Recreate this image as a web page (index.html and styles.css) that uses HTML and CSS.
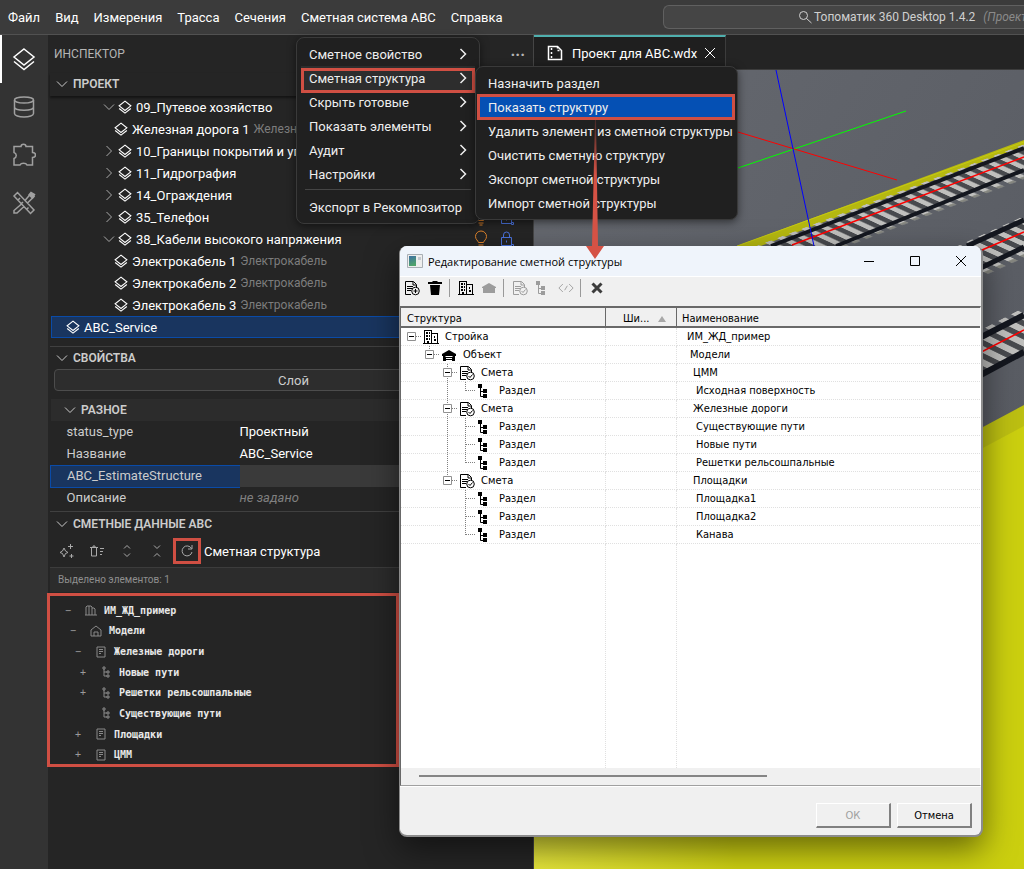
FILE: index.html
```html
<!DOCTYPE html>
<html lang="ru">
<head>
    <meta charset="UTF-8">
    <meta name="viewport" content="width=device-width, initial-scale=1.0">
    <title>Топоматик 360 Desktop</title>
    <link rel="stylesheet" href="styles.css">
</head>
<body>

    <!-- Icon sprite -->
    <svg class="sprite" aria-hidden="true">
        <symbol id="layers" viewBox="0 0 24 24"><path d="M12 2 22 10 12 18 2 10zM2 14.5 12 22.5 22 14.5"/></symbol>
        <symbol id="down" viewBox="0 0 12 12"><path d="M1 3.5 6 8.5 11 3.5"/></symbol>
        <symbol id="right" viewBox="0 0 12 12"><path d="M3.5 1 8.500 6 3.5 11"/></symbol>
        <symbol id="bulb" viewBox="0 0 16 18"><path d="M5.500 12.500C5 10.500 2.500 9.500 2.500 6.500a5.500 5.500 0 0 1 11 0c0 3-2.500 4-3 6zM5.500 15h5M6.500 17h3"/></symbol>
        <symbol id="lock" viewBox="0 0 16 18"><path d="M2.500 7.500h10v8h-10zM4.500 7.500V5a3 3 0 0 1 6 0v2.500M7.500 10.500v2M12.500 14.500h2v2h-2z"/></symbol>
        <symbol id="house" viewBox="0 0 12 12"><path d="M1 5 6 1l5 4v6H1zM4 11V7h4v4"/></symbol>
        <symbol id="sheet" viewBox="0 0 12 12"><path d="M2 1h8v10H2zM4 3.500h4M4 5.500h4M4 7.500h2"/></symbol>
        <symbol id="towers" viewBox="0 0 12 12"><path d="M1 11V3l1-1h4l1 1v8M7 4h2l1 1v6M4 2v9M0 11h12"/></symbol>
        <symbol id="branch" viewBox="0 0 12 12"><path d="M3 1h2v2H3zM4 3v7h3M4 6h3M7 5h2v2H7zM7 9h2v2H7z"/></symbol>
        <symbol id="w-buildings" viewBox="0 0 16 16"><path class="line" d="M1.500 1v14M1 1.500h8M8.500 1v14M0 14.500h16M14.500 4v11M9 4.500h6"/><path class="fill" d="M3 3h2v2H3zM6 3h1v2H6zM3 6h2v2H3zM6 6h1v2H6zM3 9h2v2H3zM6 9h1v2H6zM4 12h2v3H4zM11 7h1v2h-1zM11 10h2v2h-2z"/></symbol>
        <symbol id="w-house" viewBox="0 0 16 16"><path class="fill" d="M8 3 1 7v2h1v5h12V9h1V7z"/><path class="hole" d="M4.500 9.500h7M5 11.500h6M5 13.500h6"/></symbol>
        <symbol id="w-home" viewBox="0 0 16 16"><path class="fill" d="M8 3 1 7v1h1v5h12V8h1V7z"/></symbol>
        <symbol id="w-estimate" viewBox="0 0 16 16"><path class="line" d="M7 14.500H1.500v-13h8l3 3V7M9 2v3h3M3 6.500h6M3 8.500h5M3 10.500h4"/><circle class="line" cx="11.500" cy="11" r="3.800"/><path class="line" d="m9.500 11 1.500 1.500 2.500-3"/></symbol>
        <symbol id="w-add" viewBox="0 0 16 16"><path class="line" d="M7 14.500H1.500v-13h8l3 3V7M9 2v3h3M3 6.500h6M3 8.500h5M3 10.500h4"/><circle class="line" cx="11.500" cy="11" r="3.800"/><path class="line" d="M9.500 11h4M11.500 9v4"/></symbol>
        <symbol id="w-branch" viewBox="0 0 16 16"><path class="fill" d="M1 1h4v4H1zM6 6h4v4H6zM6 11h4v4H6z"/><path class="line" d="M3.500 4v9.500H7M3.500 8.500H7"/></symbol>
        <symbol id="w-trash" viewBox="0 0 16 16"><path class="fill" d="M1 2h4l1-1h4l1 1h4v2H1zM3 5h10l-1 10H4z"/></symbol>
        <symbol id="w-code" viewBox="0 0 18 16"><path class="line" d="M5.500 3.500 1 8l4.500 4.500M12.500 3.500 17 8l-4.500 4.500M10.500 5.500l-3 5"/></symbol>
        <symbol id="w-cross" viewBox="0 0 12 12"><path d="M1.500 1.500 10.500 10.500M10.500 1.500 1.500 10.500"/></symbol>
        <symbol id="g-line" viewBox="0 0 18 18"><path d="M8.500 0v18"/></symbol>
        <symbol id="g-tee" viewBox="0 0 18 18"><path d="M8.500 0v18M9 8.500h9"/></symbol>
        <symbol id="g-end" viewBox="0 0 18 18"><path d="M8.500 0v9M9 8.500h9"/></symbol>
        <symbol id="g-root" viewBox="0 0 18 18"><path d="M13 8.500h5"/><path class="box" d="M4.500 4.500h8v8h-8z"/><path class="minus" d="M6 8.500h5"/></symbol>
        <symbol id="g-last" viewBox="0 0 18 18"><path d="M8.500 0v4M13 8.500h5"/><path class="box" d="M4.500 4.500h8v8h-8z"/><path class="minus" d="M6 8.500h5"/></symbol>
        <symbol id="g-node" viewBox="0 0 18 18"><path d="M8.500 0v18M13 8.500h5"/><path class="box" d="M4.500 4.500h8v8h-8z"/><path class="minus" d="M6 8.500h5"/></symbol>
    </svg>

    <!-- Main menu -->
    <header class="menubar">
        <nav class="menubar-items">
            <button>Файл</button>
            <button>Вид</button>
            <button>Измерения</button>
            <button>Трасса</button>
            <button>Сечения</button>
            <button>Сметная система ABC</button>
            <button>Справка</button>
        </nav>
        <button class="search">
            <svg class="search-icon" viewBox="0 0 14 14"><circle cx="5.500" cy="5.500" r="4"/><path d="m8.500 8.500 5 4.500"/></svg>
            <span>Топоматик 360 Desktop 1.4.2</span>
            <em>(Проект для ABC)</em>
        </button>
    </header>

    <div class="workbench">

        <!-- Activity bar -->
        <aside class="activity">
            <button class="active" aria-label="Инспектор"><svg viewBox="0 0 24 24"><use href="#layers"/></svg></button>
            <button aria-label="База данных"><svg viewBox="0 0 24 24"><ellipse cx="12" cy="5" rx="9.500" ry="3"/><path d="M2.500 5v13.500c0 2 4.200 3.500 9.500 3.500s9.500-1.500 9.500-3.500V5M2.500 12c0 2 4.200 3.200 9.500 3.200s9.500-1.200 9.500-3.200"/></svg></button>
            <button aria-label="Расширения"><svg viewBox="0 0 24 24"><path d="M2 3.500h7c0-3 5-3 5 0h6.500v6c4 0 4 5 0 5v7.500H15c-1-2.500-6-2.500-7 0H2v-6.500c3-1 3-5 0-6z"/></svg></button>
            <button aria-label="Инструменты"><svg viewBox="0 0 24 24"><path d="m2 5 3.500-3.500L22 19l-3.500 3.500zM6 9l2-2M9.500 12.500l1.500-1.500M15 18l1.500-1.500M9.500 13 2 19.500V22h3l7-6.500M13 9.500 18.500 3 22 5.500 15.500 12"/><path class="solid" d="m17 4 2-2.500 3.500 2L20.500 7z"/></svg></button>
        </aside>

        <!-- Inspector -->
        <section class="inspector">
            <div class="inspector-title">
                <span>ИНСПЕКТОР</span>
                <button aria-label="Ещё">···</button>
            </div>

            <h2 class="section-title first"><svg class="chevron"><use href="#down"/></svg>ПРОЕКТ</h2>
            <ul class="project-tree">
                <li><svg class="chevron"><use href="#down"/></svg><svg class="layer"><use href="#layers"/></svg>09_Путевое хозяйство</li>
                <li class="child"><svg class="layer"><use href="#layers"/></svg>Железная дорога 1 <small>Железная дорога</small></li>
                <li><svg class="chevron"><use href="#right"/></svg><svg class="layer"><use href="#layers"/></svg>10_Границы покрытий и угодий</li>
                <li><svg class="chevron"><use href="#right"/></svg><svg class="layer"><use href="#layers"/></svg>11_Гидрография</li>
                <li><svg class="chevron"><use href="#right"/></svg><svg class="layer"><use href="#layers"/></svg>14_Ограждения</li>
                <li><svg class="chevron"><use href="#right"/></svg><svg class="layer"><use href="#layers"/></svg>35_Телефон
                    <span class="flags"><svg class="bulb"><use href="#bulb"/></svg><svg class="lock"><use href="#lock"/></svg></span></li>
                <li><svg class="chevron"><use href="#down"/></svg><svg class="layer"><use href="#layers"/></svg>38_Кабели высокого напряжения
                    <span class="flags"><svg class="bulb"><use href="#bulb"/></svg><svg class="lock"><use href="#lock"/></svg></span></li>
                <li class="child"><svg class="layer"><use href="#layers"/></svg>Электрокабель 1 <small>Электрокабель</small></li>
                <li class="child"><svg class="layer"><use href="#layers"/></svg>Электрокабель 2 <small>Электрокабель</small></li>
                <li class="child"><svg class="layer"><use href="#layers"/></svg>Электрокабель 3 <small>Электрокабель</small></li>
                <li class="selected"><svg class="layer"><use href="#layers"/></svg>ABC_Service</li>
            </ul>

            <h2 class="section-title"><svg class="chevron"><use href="#down"/></svg>СВОЙСТВА</h2>
            <button class="type-button">Слой</button>
            <h3 class="group-title"><svg class="chevron"><use href="#down"/></svg>РАЗНОЕ</h3>
            <table class="props">
                <tr><th>status_type</th><td>Проектный</td></tr>
                <tr><th>Название</th><td>ABC_Service</td></tr>
                <tr class="selected"><th>ABC_EstimateStructure</th><td></td></tr>
                <tr><th>Описание</th><td class="unset">не задано</td></tr>
            </table>

            <h2 class="section-title">
                <svg class="chevron"><use href="#down"/></svg>СМЕТНЫЕ ДАННЫЕ ABC
            </h2>
            <div class="estimate-toolbar">
                <button aria-label="Создать"><svg viewBox="0 0 16 16"><path d="M5 5 6.500 8 9 9.500 6.500 10.500 5 14 3.500 10.500 1 9.500 3.500 8zM11.500 1v5M9 3.500h5M12.500 11v4M10.500 13h4"/></svg></button>
                <button aria-label="Очистить"><svg viewBox="0 0 16 16"><path d="M1 4.500h8M2.500 5v8h5V5M4 4V3h2v1M11 5.500h4M11 8.500h3M11 11.500h2"/></svg></button>
                <button aria-label="Развернуть"><svg viewBox="0 0 16 16"><path d="m5 5.500 3-3 3 3M5 10.500l3 3 3-3"/></svg></button>
                <button aria-label="Свернуть"><svg viewBox="0 0 16 16"><path d="m5 2.500 3 3 3-3M5 13.500l3-3 3 3"/></svg></button>
                <button class="marked" aria-label="Обновить"><svg viewBox="0 0 16 16"><path d="M12.500 5.500a5 5 0 1 0 .5 3.500M13 2v4H9"/></svg></button>
                <span>Сметная структура</span>
            </div>
            <p class="selection-count">Выделено элементов: 1</p>
            <ul class="estimate-tree">
                <li><b>−</b><svg><use href="#towers"/></svg>ИМ_ЖД_пример</li>
                <li class="level-1"><b>−</b><svg><use href="#house"/></svg>Модели</li>
                <li class="level-2"><b>−</b><svg><use href="#sheet"/></svg>Железные дороги</li>
                <li class="level-3"><b>+</b><svg><use href="#branch"/></svg>Новые пути</li>
                <li class="level-3"><b>+</b><svg><use href="#branch"/></svg>Решетки рельсошпальные</li>
                <li class="level-3"><b></b><svg><use href="#branch"/></svg>Существующие пути</li>
                <li class="level-2"><b>+</b><svg><use href="#sheet"/></svg>Площадки</li>
                <li class="level-2"><b>+</b><svg><use href="#sheet"/></svg>ЦММ</li>
            </ul>
        </section>

        <!-- 3D view -->
        <main class="editor">
            <div class="tabs">
                <div class="tab">
                    <svg class="file-icon" viewBox="0 0 16 16"><path d="M1.500 1.500h9l4 4v9h-13z"/><path d="M10.500 1.500v4h4M4.500 3v11" stroke-dasharray="2 2"/></svg>
                    Проект для ABC.wdx
                    <button aria-label="Закрыть"><svg viewBox="0 0 12 12"><path d="m1 1 10 10M11 1 1 11"/></svg></button>
                </div>
            </div>
            <svg class="scene" viewBox="534 70 490 799" preserveAspectRatio="xMinYMin slice">
                <defs>
                    <linearGradient id="ground" x1="0" y1="0" x2="1" y2="1">
                        <stop offset="0" stop-color="#666970"/><stop offset="1" stop-color="#54575e"/>
                    </linearGradient>
                    <linearGradient id="field" x1="0" y1="1" x2="1" y2="0.800">
                        <stop offset="0" stop-color="#e6e63c"/><stop offset="0.400" stop-color="#cccf12"/><stop offset="1" stop-color="#cbcf0f"/>
                    </linearGradient>
                    <pattern id="sleepers-a" width="12" height="200" patternUnits="userSpaceOnUse" patternTransform="matrix(1 -0.380 0.910 0.420 801 229)">
                        <path d="M0 0h6v45H0z" fill="#bfbfbd"/><path d="M0 42h6v3H0z" fill="#85867f"/>
                    </pattern>
                    <pattern id="sleepers-b" width="12" height="200" patternUnits="userSpaceOnUse" patternTransform="matrix(1 -0.450 0.910 0.420 966 242)">
                        <path d="M0 0h6v50H0z" fill="#bfbfbd"/><path d="M0 46h6v4H0z" fill="#85867f"/>
                    </pattern>
                    <pattern id="sleepers-c" width="13" height="200" patternUnits="userSpaceOnUse" patternTransform="matrix(1 -0.520 0.900 0.440 998 321)">
                        <path d="M0 0h7v52H0z" fill="#bfbfbd"/><path d="M0 48h7v4H0z" fill="#85867f"/>
                    </pattern>
                </defs>
                <rect x="534" y="70" width="490" height="799" fill="url(#ground)"/>
                <path d="M737 246 1024 140v6L761 246z" fill="#b5b810"/>
                <path d="M737 246 1024 142" stroke="#c5c912"/>
                <path d="M771 246 1024 148v24L840 246z" fill="#484a4e"/>
                <path d="M700 267 1024 144v55L700 330z" fill="url(#sleepers-a)"/>
                <path d="M771 246 1024 148M836 246 1024 170" stroke="#14171f" stroke-width="4"/>
                <path d="M792 245 1024 157" stroke="#f00" stroke-width="1.500"/>

                <path d="M967 246 1024 220v26l-60 30z" fill="#484a4e"/>
                <path d="M930 258 1024 216v48l-94 42z" fill="url(#sleepers-b)"/>
                <path d="M967 246 1024 220M960 278 1024 247" stroke="#14171f" stroke-width="5"/>
                <path d="M982 250 1024 232" stroke="#f00" stroke-width="1.500"/>

                <path d="M960 346 1024 315v37l-64 33z" fill="#484a4e"/>
                <path d="M940 351 1024 307v60l-84 44z" fill="url(#sleepers-c)"/>
                <path d="M960 348 1024 315M960 386 1024 352" stroke="#14171f" stroke-width="6"/>
                <path d="M960 363 1024 330" stroke="#f00" stroke-width="1.500"/>

                <path d="M534 667 1024 405v464H534z" fill="#bcbf12"/>
                <path d="M534 688 1024 426v443H534z" fill="url(#field)"/>

                <path d="M738 168 906 111" stroke="#0f0"/>
                <path d="M738 132 897 180" stroke="#f00"/>
                <path d="M776 70 814 246" stroke="#00f"/>
            </svg>
        </main>
    </div>

    <!-- Drop-down menu and its submenu -->
    <div class="menu menu-main">
        <button>Сметное свойство<svg><use href="#right"/></svg></button>
        <button class="open">Сметная структура<svg><use href="#right"/></svg></button>
        <button>Скрыть готовые<svg><use href="#right"/></svg></button>
        <button>Показать элементы<svg><use href="#right"/></svg></button>
        <button>Аудит<svg><use href="#right"/></svg></button>
        <button>Настройки<svg><use href="#right"/></svg></button>
        <hr>
        <button>Экспорт в Рекомпозитор</button>
    </div>
    <div class="menu menu-sub">
        <button>Назначить раздел</button>
        <button class="current">Показать структуру</button>
        <button>Удалить элемент из сметной структуры</button>
        <button>Очистить сметную структуру</button>
        <button>Экспорт сметной структуры</button>
        <button>Импорт сметной структуры</button>
    </div>

    <!-- Estimate structure editor -->
    <div class="dialog" role="dialog" aria-labelledby="dialog-title">
        <div class="dialog-title">
            <svg class="app-icon" viewBox="0 0 16 14"><defs><linearGradient id="app" x1="0" y1="0" x2="0.300" y2="1"><stop offset="0" stop-color="#3d6fa5"/><stop offset="1" stop-color="#4fa36b"/></linearGradient></defs><path d="M0.500 0.500h15v13H0.500z" fill="#eee" stroke="#a9afb5"/><path d="M2 2h7v10H2z" fill="url(#app)"/><path d="M11 3h3v3h-3z" fill="#c4cacf"/></svg>
            <span id="dialog-title">Редактирование сметной структуры</span>
            <button aria-label="Свернуть"><svg viewBox="0 0 12 12"><path d="M1 6.500h10"/></svg></button>
            <button aria-label="Развернуть"><svg viewBox="0 0 12 12"><path d="M1.500 1.500h9v9h-9z"/></svg></button>
            <button aria-label="Закрыть"><svg viewBox="0 0 12 12"><path d="m1 1 10 10M11 1 1 11"/></svg></button>
        </div>
        <div class="dialog-toolbar">
            <button aria-label="Добавить"><svg><use href="#w-add"/></svg></button>
            <button aria-label="Удалить"><svg><use href="#w-trash"/></svg></button>
            <i></i>
            <button aria-label="Стройка"><svg><use href="#w-buildings"/></svg></button>
            <button aria-label="Объект" disabled><svg><use href="#w-home"/></svg></button>
            <i></i>
            <button aria-label="Смета" disabled><svg><use href="#w-estimate"/></svg></button>
            <button aria-label="Раздел" disabled><svg><use href="#w-branch"/></svg></button>
            <button aria-label="Код" disabled><svg><use href="#w-code"/></svg></button>
            <i></i>
            <button class="cross" aria-label="Отменить"><svg><use href="#w-cross"/></svg></button>
        </div>
        <div class="list">
            <table>
                <thead>
                    <tr><th>Структура</th><th>Ши... <span class="sort"></span></th><th>Наименование</th></tr>
                </thead>
                <tbody>
                    <tr><td><div class="node"><svg class="guide"><use href="#g-root"/></svg><svg><use href="#w-buildings"/></svg>Стройка</div></td><td></td><td class="name-0">ИМ_ЖД_пример</td></tr>
                    <tr><td><div class="node"><i></i><svg class="guide"><use href="#g-last"/></svg><svg><use href="#w-house"/></svg>Объект</div></td><td></td><td class="name-1">Модели</td></tr>
                    <tr><td><div class="node"><i></i><i></i><svg class="guide"><use href="#g-node"/></svg><svg><use href="#w-estimate"/></svg>Смета</div></td><td></td><td class="name-2">ЦММ</td></tr>
                    <tr><td><div class="node"><i></i><i></i><svg class="guide"><use href="#g-line"/></svg><svg class="guide"><use href="#g-end"/></svg><svg><use href="#w-branch"/></svg>Раздел</div></td><td></td><td class="name-3">Исходная поверхность</td></tr>
                    <tr><td><div class="node"><i></i><i></i><svg class="guide"><use href="#g-node"/></svg><svg><use href="#w-estimate"/></svg>Смета</div></td><td></td><td class="name-2">Железные дороги</td></tr>
                    <tr><td><div class="node"><i></i><i></i><svg class="guide"><use href="#g-line"/></svg><svg class="guide"><use href="#g-tee"/></svg><svg><use href="#w-branch"/></svg>Раздел</div></td><td></td><td class="name-3">Существующие пути</td></tr>
                    <tr><td><div class="node"><i></i><i></i><svg class="guide"><use href="#g-line"/></svg><svg class="guide"><use href="#g-tee"/></svg><svg><use href="#w-branch"/></svg>Раздел</div></td><td></td><td class="name-3">Новые пути</td></tr>
                    <tr><td><div class="node"><i></i><i></i><svg class="guide"><use href="#g-line"/></svg><svg class="guide"><use href="#g-end"/></svg><svg><use href="#w-branch"/></svg>Раздел</div></td><td></td><td class="name-3">Решетки рельсошпальные</td></tr>
                    <tr><td><div class="node"><i></i><i></i><svg class="guide"><use href="#g-last"/></svg><svg><use href="#w-estimate"/></svg>Смета</div></td><td></td><td class="name-2">Площадки</td></tr>
                    <tr><td><div class="node"><i></i><i></i><i></i><svg class="guide"><use href="#g-tee"/></svg><svg><use href="#w-branch"/></svg>Раздел</div></td><td></td><td class="name-3">Площадка1</td></tr>
                    <tr><td><div class="node"><i></i><i></i><i></i><svg class="guide"><use href="#g-tee"/></svg><svg><use href="#w-branch"/></svg>Раздел</div></td><td></td><td class="name-3">Площадка2</td></tr>
                    <tr><td><div class="node"><i></i><i></i><i></i><svg class="guide"><use href="#g-end"/></svg><svg><use href="#w-branch"/></svg>Раздел</div></td><td></td><td class="name-3">Канава</td></tr>
                    <tr class="rest"><td></td><td></td><td></td></tr>
                </tbody>
            </table>
            <div class="scrollbar"><div class="thumb"></div></div>
        </div>
        <div class="dialog-footer">
            <button disabled>ОК</button>
            <button>Отмена</button>
        </div>
    </div>

    <svg class="arrow" viewBox="0 0 18 140" aria-hidden="true">
        <defs><linearGradient id="fade" x1="0" y1="0" x2="0" y2="1"><stop offset="0" stop-color="#d55245" stop-opacity="0.200"/><stop offset="0.400" stop-color="#d55245"/></linearGradient></defs>
        <path d="M9 0h1l2 127h6l-9 13-9-13h6z" fill="url(#fade)"/>
    </svg>

</body>
</html>
```
FILE: styles.css
```css
*, *::after {
    box-sizing: border-box;
}
body {
    margin: 0;
    min-height: 100vh;
    display: flex;
    flex-direction: column;
    position: relative;
    overflow: hidden;
    background: #252525;
    color: #fff;
    font-family: Roboto, sans-serif;
    font-size: 13px;
}
button {
    padding: 0;
    border: none;
    background: none;
    color: inherit;
    font: inherit;
}
svg {
    flex: none;
    fill: none;
    stroke: currentColor;
}
ul {
    list-style: none;
    margin: 0;
    padding: 0;
}
.sprite {
    position: absolute;
    width: 0;
    height: 0;
}

/* Menu bar */
.menubar {
    display: flex;
    align-items: center;
    height: 35px;
    flex: none;
    padding-left: 8px;
    background: #3b3b3b;
    border-bottom: 1px solid #515151;
}
.menubar-items {
    flex: 0 0 655px;
    display: flex;
    gap: 15px;
    white-space: nowrap;
}
.search {
    flex: 1;
    min-width: 0;
    overflow: hidden;
    display: flex;
    align-items: center;
    gap: 2px;
    height: 24px;
    padding-left: 134px;
    border: 1px solid #606060;
    border-right: none;
    border-radius: 6px 0 0 6px;
    background: #454545;
    color: #d0d0d0;
    font-size: 12px;
    white-space: nowrap;
}
.search em {
    margin-left: 6px;
    color: #8a8a8a;
}
.search-icon {
    width: 14px;
    height: 14px;
}

.workbench {
    flex: 1;
    display: flex;
}

/* Activity bar */
.activity {
    flex: none;
    width: 48px;
    background: #333;
    color: #a0a0a0;
}
.activity button {
    display: flex;
    align-items: center;
    justify-content: center;
    width: 48px;
    height: 48px;
}
.activity .active {
    color: #fff;
    box-shadow: inset 2px 0 #fff;
}
.activity svg {
    width: 24px;
    height: 24px;
    stroke-width: 1.500;
}
.solid {
    fill: currentColor;
}

/* Inspector */
.inspector {
    flex: none;
    width: 486px;
    padding-left: 2px;
    border-right: 1px solid #454545;
}
.inspector-title {
    display: flex;
    align-items: center;
    justify-content: space-between;
    height: 38px;
    padding: 0 8px 0 4px;
    color: #b5b5b5;
    font-size: 12px;
}
.inspector-title button {
    font-size: 16px;
    font-weight: bold;
}
.section-title, .group-title {
    display: flex;
    align-items: center;
    gap: 5px;
    height: 23px;
    margin: 8px 0 0;
    padding-left: 6px;
    border-top: 1px solid #404040;
    color: #ccc;
    font-size: 12px;
    font-weight: 600;
}
.section-title.first {
    margin: 0;
    padding-bottom: 2px;
    border: none;
    box-shadow: 0 2px 2px #151515;
}
.group-title {
    height: 22px;
    margin: 8px 0 0 1px;
    padding-left: 13px;
    border: none;
    background: #2c2c2c;
}
.chevron {
    width: 12px;
    height: 12px;
    color: #ccc;
}
.project-tree li {
    display: flex;
    align-items: center;
    gap: 4px;
    height: 22px;
    padding-left: 53px;
    white-space: nowrap;
}
.project-tree .chevron {
    margin-right: -1px;
    color: #aaa;
}
.project-tree .child {
    padding-left: 64px;
}
.project-tree .selected {
    margin-left: 1px;
    padding-left: 14px;
    border: 1px solid #0a4ba8;
    background: #19355f;
}
.project-tree small {
    color: #7d7d7d;
    font-size: 12px;
}
.layer {
    width: 14px;
    height: 14px;
    stroke-width: 2;
}
.flags {
    display: flex;
    gap: 10px;
    margin: 0 18px 0 auto;
}
.flags svg {
    width: 16px;
    height: 18px;
}
.bulb {
    color: #e0842c;
}
.lock {
    color: #4a72dc;
}
.type-button {
    width: 100%;
    height: 22px;
    margin-left: 4px;
    padding-right: 4px;
    border: 1px solid #4c4c4c;
    border-radius: 4px;
    background: #2d2d2d;
    color: #ccc;
}
.props {
    width: 100%;
    border-collapse: collapse;
    table-layout: fixed;
}
.props tr {
    height: 22px;
}
.props th, .props td {
    padding: 0 0 0 16px;
    line-height: 20px;
    text-align: left;
    font-weight: normal;
}
.props th {
    width: 189px;
    color: #ccc;
}
.props td {
    padding-left: 0;
}
.props .selected th {
    border: 1px solid #0a4ba8;
    border-right: none;
    background: #19355f;
}
.props .selected td {
    background: #3a3a3a;
}
.props .unset {
    color: #808080;
    font-style: italic;
}
.props + .section-title {
    height: 24px;
    margin-top: 2px;
}
.estimate-toolbar {
    display: flex;
    align-items: center;
    height: 33px;
    padding-left: 2px;
    border-bottom: 1px solid #3c3c3c;
}
.estimate-toolbar button {
    display: flex;
    align-items: center;
    justify-content: center;
    width: 30px;
    height: 26px;
    color: #aaa;
}
.estimate-toolbar svg {
    width: 16px;
    height: 16px;
}
.estimate-toolbar .marked {
    box-shadow: inset 0 0 0 3px #d04f43;
    width: 28px;
    margin: 0 3px 0 1px;
}
.selection-count {
    height: 24px;
    margin: 0;
    padding-left: 8px;
    background: #2c2c2c;
    color: #8f8f8f;
    font-size: 10px;
    line-height: 24px;
}
.estimate-tree {
    position: relative;
    display: grid;
    height: 177px;
    padding: 8px 0 4px;
    font: bold 10px "DejaVu Sans Mono", monospace;
    color: #e8e8e8;
}
.estimate-tree::after {
    content: "";
    position: absolute;
    left: -3px;
    top: 1px;
    width: 352px;
    height: 174px;
    border: 3px solid #d04f43;
}
.estimate-tree li {
    display: flex;
    align-items: center;
    padding-left: 15px;
}
.estimate-tree .level-1 {
    padding-left: 20px;
}
.estimate-tree .level-2 {
    padding-left: 25px;
}
.estimate-tree .level-3 {
    padding-left: 30px;
}
.estimate-tree b {
    width: 20px;
    color: #9a9a9a;
    font-weight: normal;
}
.estimate-tree svg {
    width: 12px;
    height: 12px;
    margin-right: 7px;
    color: #8a8a8a;
}

/* Editor area */
.editor {
    flex: 1;
    min-width: 0;
    display: flex;
    flex-direction: column;
}
.tabs {
    display: flex;
    height: 35px;
    border-bottom: 1px solid #3c3c3c;
    background: #242424;
}
.tab {
    display: flex;
    align-items: center;
    padding: 0 9px 0 13px;
    border-top: 2px solid #4fb0ae;
    border-right: 1px solid #3c3c3c;
    background: #1f1f1f;
    white-space: nowrap;
}
.file-icon {
    width: 16px;
    height: 16px;
    margin-right: 9px;
    stroke-width: 1.500;
}
.tab button {
    display: flex;
    margin-left: 7px;
}
.tab button svg {
    width: 12px;
    height: 12px;
}
.scene {
    flex: 1;
    min-height: 0;
    width: 100%;
    stroke: none;
}

/* Menus */
.menu {
    position: absolute;
    padding: 4px;
    border: 1px solid #3a3a3a;
    border-radius: 8px;
    background: #202020;
    box-shadow: 0 2px 8px rgba(0, 0, 0, 0.5);
    color: #eee;
}
.menu-main {
    left: 296px;
    top: 37px;
    width: 184px;
}
.menu-sub {
    left: 475px;
    top: 66px;
    width: 263px;
}
.menu button {
    position: relative;
    display: flex;
    align-items: center;
    justify-content: space-between;
    width: 100%;
    height: 24px;
    padding: 0 6px 0 8px;
    white-space: nowrap;
}
.menu button svg {
    width: 12px;
    height: 12px;
    stroke-width: 1.500;
}
.menu hr {
    height: 1px;
    margin: 3px 4px 5px;
    border: none;
    background: #454545;
}
.menu .open {
    background: #2d2d2d;
}
.menu .current {
    background: #0550b4;
}
.menu .open::after, .menu .current::after {
    content: "";
    position: absolute;
    inset: 2px 0 -3px 0;
    border: 3px solid #d04f43;
}
.menu .current::after {
    inset: -1px -2px -1px -3px;
}

/* Dialog window */
.dialog {
    position: absolute;
    left: 399px;
    top: 246px;
    width: 584px;
    border: 1px solid #8c8c8c;
    border-width: 0 2px 2px 1px;
    border-radius: 8px;
    overflow: hidden;
    background: #f0f0f0;
    box-shadow: 0 12px 32px rgba(0, 0, 0, 0.5);
    color: #000;
    font-family: "DejaVu Sans Condensed", sans-serif;
    font-size: 11px;
}
.dialog-title {
    display: flex;
    align-items: center;
    gap: 5px;
    height: 31px;
    padding-left: 7px;
    border-bottom: 1px solid #fff;
    background: #eff4fb;
    font-family: "Open Sans", sans-serif;
}
.dialog-title span {
    flex: 1;
}
.app-icon {
    width: 16px;
    height: 14px;
    stroke: none;
}
.dialog-title button {
    display: flex;
    justify-content: center;
    width: 41px;
}
.dialog-title button svg {
    width: 12px;
    height: 12px;
}
.dialog-toolbar {
    display: flex;
    align-items: center;
    height: 29px;
    padding-bottom: 7px;
}
.dialog-toolbar button {
    display: flex;
    justify-content: center;
    width: 23px;
}
.dialog-toolbar svg {
    width: 16px;
    height: 16px;
}
.dialog-toolbar button:disabled {
    color: #9c9c9c;
}
.dialog-toolbar i {
    width: 1px;
    height: 18px;
    margin: 0 4px 0 3px;
    background: #999;
}
.dialog-toolbar .cross {
    color: #3c3c3c;
    stroke-width: 3;
}
.dialog-toolbar .cross svg {
    width: 12px;
    height: 12px;
}
symbol .fill {
    fill: currentColor;
    stroke: none;
}
symbol .hole {
    stroke: #fff;
}
.list {
    border: 1px solid #696969;
    border-width: 2px 0 0 1px;
    border-right: 1px solid #fff;
    border-bottom: 1px solid #a0a0a0;
    background: #fff;
}
.list table {
    width: 100%;
    border-collapse: separate;
    border-spacing: 0;
    table-layout: fixed;
}
.list th {
    height: 20px;
    padding: 3px 0 0 6px;
    border-right: 1px solid #696969;
    border-bottom: 2px solid #696969;
    background: #f0f0f0;
    font-weight: normal;
    text-align: left;
}
.list th:first-child {
    width: 205px;
}
.list th:nth-child(2) {
    width: 71px;
    padding-left: 17px;
}
.list th:last-child {
    padding-left: 5px;
    border-right: none;
}
.sort {
    display: inline-block;
    margin-left: 5px;
    border: 4px solid transparent;
    border-top: none;
    border-bottom: 6px solid #a8a8a8;
}
.list td {
    height: 18px;
    padding: 0;
    border-right: 1px dotted #e0e0e0;
    border-bottom: 1px dotted #e0e0e0;
}
.list td:last-child {
    border-right: none;
}
.list .name-0 {
    padding-left: 10px;
}
.list .name-1 {
    padding-left: 13px;
}
.list .name-2 {
    padding-left: 16px;
}
.list .name-3 {
    padding-left: 19px;
}
.list .rest td {
    height: 224px;
    border-bottom: none;
}
.node {
    display: flex;
    align-items: center;
    height: 17px;
    padding-left: 2px;
}
.node i {
    width: 18px;
}
.node svg {
    width: 16px;
    height: 16px;
    margin: 0 6px 0 2px;
}
.node .guide {
    width: 18px;
    height: 18px;
    margin: 0;
    stroke: #808080;
    stroke-dasharray: 1 1;
}
symbol .box {
    fill: #fff;
    stroke: #909090;
    stroke-dasharray: none;
}
symbol .minus {
    stroke: #000;
    stroke-dasharray: none;
}
.scrollbar {
    height: 17px;
    padding: 7px 18px;
    background: #f0f0f0;
}
.thumb {
    width: 64%;
    height: 2px;
    background: #858585;
}
.dialog-footer {
    display: flex;
    justify-content: flex-end;
    gap: 6px;
    padding: 16px 9px 7px;
    border-top: 1px solid #fff;
}
.dialog-footer button {
    width: 75px;
    height: 25px;
    border: 1px solid #fff;
    border-right: 2px solid #808080;
    border-bottom: 2px solid #808080;
}
.dialog-footer button:disabled {
    color: #a0a0a0;
}

.arrow {
    position: absolute;
    left: 586px;
    top: 119px;
    width: 18px;
    height: 140px;
    stroke: none;
}
```
